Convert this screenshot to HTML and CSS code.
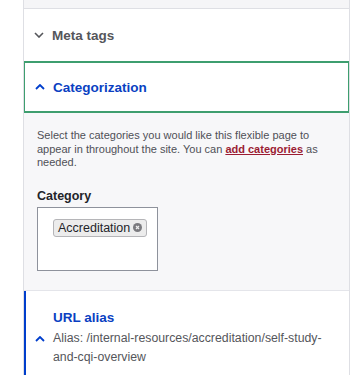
FILE: index.html
```html
<!DOCTYPE html>
<html lang="en">
<head>
<meta charset="utf-8">
<link rel="stylesheet" href="styles.css">
</head>
<body>
<div class="panel">
  <div class="topband"></div>
  <div class="row meta">
    <svg class="chev" width="10" height="6" viewBox="0 0 10 6"><path d="M1 1l4 4 4-4" fill="none" stroke="#55565b" stroke-width="1.6"/></svg>
    <span class="row-title">Meta tags</span>
  </div>
  <div class="row cat">
    <svg class="chev" width="10" height="6" viewBox="0 0 10 6"><path d="M1 5l4-4 4 4" fill="none" stroke="#003ecc" stroke-width="1.8"/></svg>
    <span class="row-title blue">Categorization</span>
  </div>
  <div class="content">
    <p class="desc">Select the categories you would like this flexible page to appear in throughout the site. You can <a href="#">add categories</a> as needed.</p>
    <div class="label">Category</div>
    <div class="select">
      <span class="tag">Accreditation<span class="x">
        <svg width="9" height="9" viewBox="0 0 9 9"><circle cx="4.5" cy="4.5" r="4.5" fill="#7a7a7e"/><path d="M3 3l3 3M6 3l-3 3" stroke="#ededed" stroke-width="1.2"/></svg>
      </span></span>
    </div>
  </div>
  <div class="alias">
    <div class="alias-title">URL alias</div>
    <div class="alias-line">
      <svg class="chev" width="10" height="6" viewBox="0 0 10 6"><path d="M1 5l4-4 4 4" fill="none" stroke="#003ecc" stroke-width="1.8"/></svg>
      <span class="alias-text">Alias: /internal-resources/accreditation/self-study-and-cqi-overview</span>
    </div>
  </div>
</div>
</body>
</html>
```

FILE: styles.css
```css
html, body {
  margin: 0;
  padding: 0;
  background: #ffffff;
}
body {
  font-family: "Liberation Sans", Arial, sans-serif;
  color: #232429;
}
.panel {
  margin-left: 23px;
  width: 325px;
  border-left: 1px solid #dedfe4;
  border-right: 1px solid #dedfe4;
  height: 375px;
  overflow: hidden;
}
.topband {
  height: 8px;
  background: #f5f5f7;
  border-bottom: 1px solid #dedfe4;
}
.row {
  display: flex;
  align-items: center;
  gap: 8px;
  padding-left: 10px;
}
.meta {
  height: 52px;
}
.cat {
  height: 48px;
  margin-left: -1px;
  margin-right: -1px;
  border: 2px solid #3e9e6f;
}
.chev {
  flex: none;
  width: 10px;
}
.row-title {
  font-size: 13.5px;
  font-weight: bold;
  color: #55565b;
}
.row-title.blue {
  color: #0a3fc2;
}
.content {
  background: #f7f7f9;
  height: 178px;
  padding: 16px 14px 0 13px;
  box-sizing: border-box;
  border-bottom: 1px solid #e4e5ea;
}
.desc {
  margin: 0;
  font-size: 11px;
  line-height: 13.5px;
  color: #4f5057;
  width: 290px;
}
.desc a {
  color: #9b1c33;
  font-weight: bold;
  text-decoration: underline;
}
.label {
  margin-top: 18px;
  font-size: 12.5px;
  line-height: 16px;
  font-weight: bold;
  color: #232429;
}
.select {
  margin-top: 3px;
  width: 121px;
  height: 64px;
  background: #fff;
  border: 1px solid #8e929c;
  box-sizing: border-box;
  padding: 10px 0 0 15px;
}
.tag {
  display: inline-flex;
  align-items: center;
  gap: 3px;
  height: 16px;
  padding: 0 4px;
  background: #ececec;
  border: 1px solid #b5b5b8;
  border-radius: 3px;
  font-size: 12.5px;
  color: #232429;
}
.x {
  display: inline-flex;
}
.alias {
  border-left: 3px solid #003ecc;
  margin-left: -1px;
  padding: 18px 0 0 27px;
  height: 84px;
  background: #fff;
}
.alias-title {
  font-size: 13.5px;
  font-weight: bold;
  color: #0a3fc2;
  line-height: 18px;
}
.alias-line {
  position: relative;
  margin-top: 2px;
}
.alias-line .chev {
  position: absolute;
  left: -18px;
  top: 7px;
}
.alias-text {
  display: block;
  width: 272px;
  font-size: 12.3px;
  line-height: 19px;
  color: #55565b;
}
```
